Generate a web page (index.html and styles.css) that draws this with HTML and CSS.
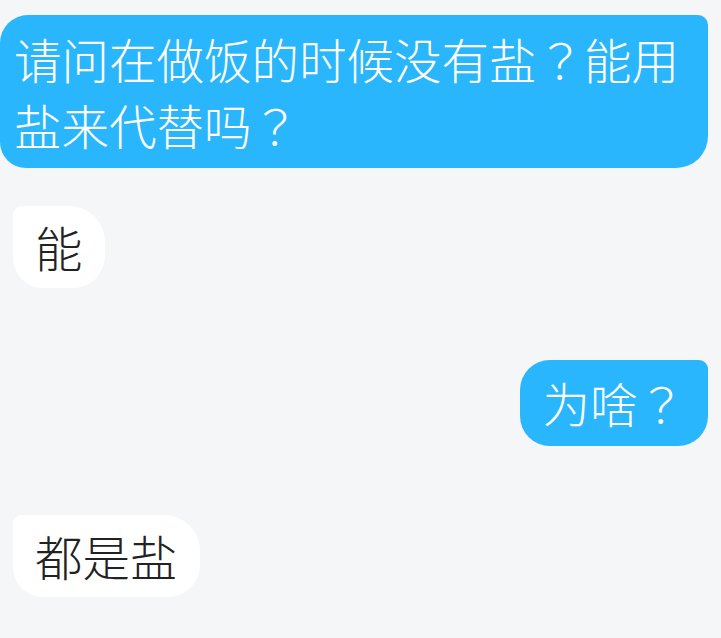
FILE: index.html
```html
<!DOCTYPE html>
<html lang="zh-CN">
<head>
  <meta charset="UTF-8" />
  <meta name="viewport" content="width=device-width, initial-scale=1.0" />
  <title>聊天</title>
  <link rel="stylesheet" href="styles.css">
</head>
<body>
  <div class="chat">
    <div class="row right">
      <div class="bubble mine long">请问在做饭的时候没有盐<span class="punct" lang="zh-TW">？</span>能用盐来代替吗<span class="punct" lang="zh-TW">？</span></div>
    </div>
    <div class="row left first-reply">
      <div class="bubble theirs">能</div>
    </div>
    <div class="row right spaced">
      <div class="bubble mine">为啥<span class="punct" lang="zh-TW">？</span></div>
    </div>
    <div class="row left spaced last">
      <div class="bubble theirs">都是盐</div>
    </div>
  </div>
</body>
</html>
```

FILE: styles.css
```css
body {
  margin: 0;
  background: #f5f6f8;
  font-family: "Noto Sans CJK SC", "Noto Sans", sans-serif;
}

.chat {
  display: flex;
  flex-direction: column;
  padding: 15px 13px 0 13px;
}

.row {
  display: flex;
}

.row.right {
  justify-content: flex-end;
}

.row.left {
  justify-content: flex-start;
}

.first-reply {
  margin-top: 38px;
}

.spaced {
  margin-top: 72px;
}

.spaced.last {
  margin-top: 69px;
}

.bubble {
  font-size: 47.5px;
  line-height: 66px;
  font-weight: 300;
}

/* centred full-width question mark */
.punct {
  display: inline-block;
  line-height: 66px;
  font-family: "Noto Sans CJK TC", "Noto Sans CJK JP", sans-serif;
}

.mine {
  background: #29b6fc;
  color: #fff;
  padding: 10px 23px;
  border-radius: 30px 9px 30px 30px;
}

.mine.long {
  margin-left: -13px;
  padding: 11px 16px 10px 14px;
  border-radius: 28px 10px 32px 26px;
}

.theirs {
  background: #fff;
  color: #222;
  padding: 8px 22px;
  border-radius: 9px 36px 32px 30px;
}
```
